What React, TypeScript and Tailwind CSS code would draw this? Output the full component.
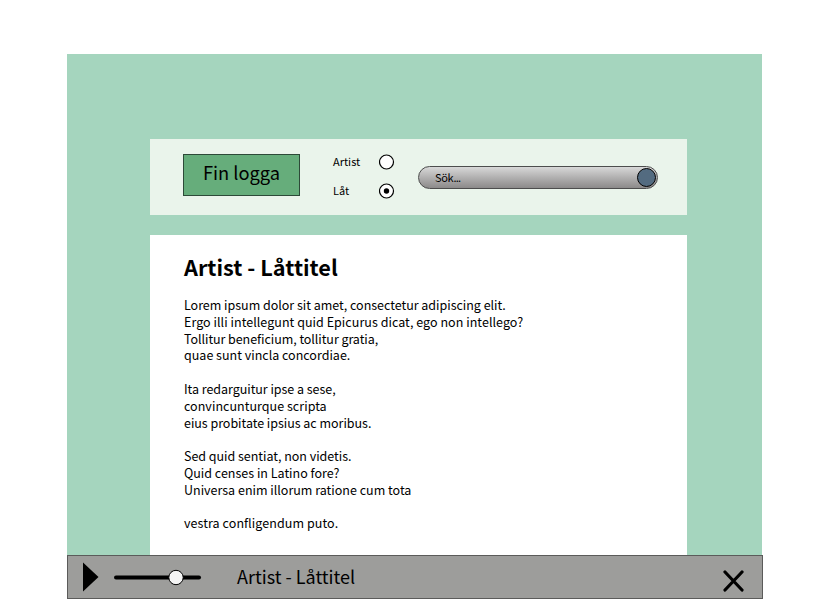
const lines: { text: string; spacing: string }[] = [
  { text: 'Lorem ipsum dolor sit amet, consectetur adipiscing elit.', spacing: 'tracking-[-0.02px]' },
  { text: 'Ergo illi intellegunt quid Epicurus dicat, ego non intellego?', spacing: 'tracking-[0.04px]' },
  { text: 'Tollitur beneficium, tollitur gratia,', spacing: 'tracking-[-0.06px]' },
  { text: 'quae sunt vincla concordiae.', spacing: 'tracking-normal' },
  { text: '', spacing: '' },
  { text: 'Ita redarguitur ipse a sese,', spacing: 'tracking-[-0.04px]' },
  { text: 'convincunturque scripta', spacing: 'tracking-[0.03px]' },
  { text: 'eius probitate ipsius ac moribus.', spacing: 'tracking-[-0.03px]' },
  { text: '', spacing: '' },
  { text: 'Sed quid sentiat, non videtis.', spacing: 'tracking-[-0.03px]' },
  { text: 'Quid censes in Latino fore?', spacing: 'tracking-normal' },
  { text: 'Universa enim illorum ratione cum tota', spacing: 'tracking-normal' },
  { text: '', spacing: '' },
  { text: 'vestra confligendum puto.', spacing: 'tracking-[0.08px]' },
];

function Radio({ label, checked }: { label: string; checked?: boolean }) {
  return (
    <div className="flex h-[16px] w-[62px] items-start justify-between">
      <span className="text-[11px] leading-[15px]">{label}</span>
      <svg width="16" height="16" viewBox="0 0 16 16" className="shrink-0">
        <circle cx="7.5" cy="8" r="7" fill="white" stroke="black" strokeWidth="1.2" />
        {checked && <circle cx="7.5" cy="8" r="2.7" />}
      </svg>
    </div>
  );
}

function Header() {
  return (
    <header className="flex h-[76px] w-[537px] shrink-0 bg-[#eaf4eb] pl-[33px] pt-[15px]">
      <div className="flex h-[42px] w-[117px] justify-center border border-[#2d4a38] bg-[#66ad7b] text-[18.3px] leading-[34px]">
        Fin logga
      </div>
      <div className="ml-[33px] flex flex-col gap-[13px]">
        <Radio label="Artist" />
        <Radio label="Låt" checked />
      </div>
      <div className="ml-[23px] mt-[12px] flex h-[23px] w-[240px] items-center justify-between rounded-full border border-[#4d4d4d] bg-linear-to-b from-[#d8d8d8] to-[#8c8a8a] pl-[16px] pr-px">
        <span className="-mt-[2px] text-[11px] leading-[18px] tracking-[-0.3px]">
          Sök<span className="tracking-[-0.8px]">...</span>
        </span>
        <span className="size-[19px] rounded-full border-[1.5px] border-black bg-[#536b80]" />
      </div>
    </header>
  );
}

function Player() {
  return (
    <footer className="flex h-[44px] w-[696px] shrink-0 items-center border border-[#5b5b5a] bg-[#9d9d9b]">
      <svg width="16" height="30" viewBox="0 0 16 30" className="ml-[15px]">
        <path d="M0 0.5V29.5L15.5 15Z" />
      </svg>
      <svg width="88" height="18" viewBox="0 0 88 18" className="ml-[15px]">
        <path d="M2 9.5H85" stroke="black" strokeWidth="4" strokeLinecap="round" />
        <circle cx="62" cy="9.5" r="7.2" fill="#f5f5f5" stroke="black" strokeWidth="1" />
      </svg>
      <span className="mb-[3px] ml-[35px] text-[18px] leading-[24px]">Artist - Låttitel</span>
      <svg width="22" height="22" viewBox="0 0 22 22" className="ml-auto mr-[17px] mt-[7px]">
        <path d="M2 2L19 20M19 2L2 20" stroke="black" strokeWidth="3.2" strokeLinecap="round" />
      </svg>
    </footer>
  );
}

export default function App() {
  return (
    <div className="h-[599px] w-[838px] overflow-hidden bg-white pl-[67px] pt-[54px] font-['Noto_Sans_CJK_SC',sans-serif] text-black">
      <div className="flex h-[545px] w-[695px] flex-col bg-[#a5d5be]">
        <div className="flex h-[501px] flex-col gap-[19.5px] pl-[83px] pt-[85px]">
          <Header />
          <main className="w-[537px] grow bg-white pl-[34px] pt-[17.5px]">
            <h1 className="text-[21.7px] font-bold leading-[30px]">Artist - Låttitel</h1>
            <div className="mt-[15px] text-[12.5px] leading-[16.8px] [font-feature-settings:'liga'_1]">
              {lines.map((line, i) => (
                <p key={i} className="h-[16.8px] whitespace-nowrap">
                  <span className={line.spacing}>{line.text}</span>
                </p>
              ))}
            </div>
          </main>
        </div>
        <Player />
      </div>
    </div>
  );
}
